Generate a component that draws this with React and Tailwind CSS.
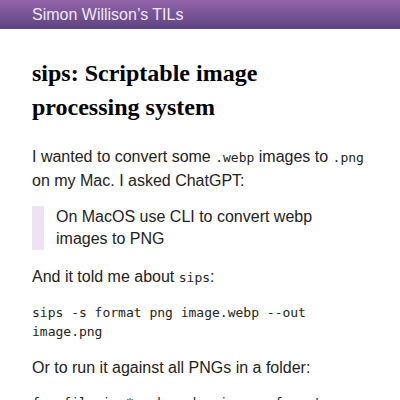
export default function App() {
  return (
    <div className="min-h-[400px] bg-white font-['Liberation_Sans',Arial,sans-serif] text-[#222]">
      <header className="h-[29px] bg-gradient-to-b from-[#9563ab] to-[#5d4480] px-8 text-[16px] leading-[29px] text-[#eeeaf2]">
        Simon Willison’s TILs
      </header>

      <main className="px-8 pt-[27px]">
        <h1 className="font-['Liberation_Serif','Times_New_Roman',serif] text-[24px] font-bold leading-[34px] text-black">
          sips: Scriptable image processing system
        </h1>

        <p className="mt-[21px] text-[16px] leading-[23px]">
          I wanted to convert some <Code>.webp</Code> images to{" "}
          <Code>.png</Code> on my Mac. I asked ChatGPT:
        </p>

        <blockquote className="mt-[14px] border-l-[12px] border-[#eee3f2] pl-[12px] text-[16px] leading-[22px]">
          On MacOS use CLI to convert webp images to PNG
        </blockquote>

        <p className="mt-[15px] text-[16px] leading-[23px]">
          And it told me about <Code>sips</Code>:
        </p>

        <pre className="mt-[14px] whitespace-pre-wrap font-['DejaVu_Sans_Mono',monospace] text-[13px] leading-[19px]">
          sips -s format png image.webp --out image.png
        </pre>

        <p className="mt-[15px] text-[16px] leading-[23px]">
          Or to run it against all PNGs in a folder:
        </p>

        <pre className="mt-[14px] whitespace-pre-wrap font-['DejaVu_Sans_Mono',monospace] text-[13px] leading-[19px]">
          for file in *.webp; do sips -s format png "$file" --out "${"{"}file%.webp{"}"}.png"; done
        </pre>
      </main>
    </div>
  );
}

function Code({ children }) {
  return (
    <code className="font-['DejaVu_Sans_Mono',monospace] text-[13px]">
      {children}
    </code>
  );
}
